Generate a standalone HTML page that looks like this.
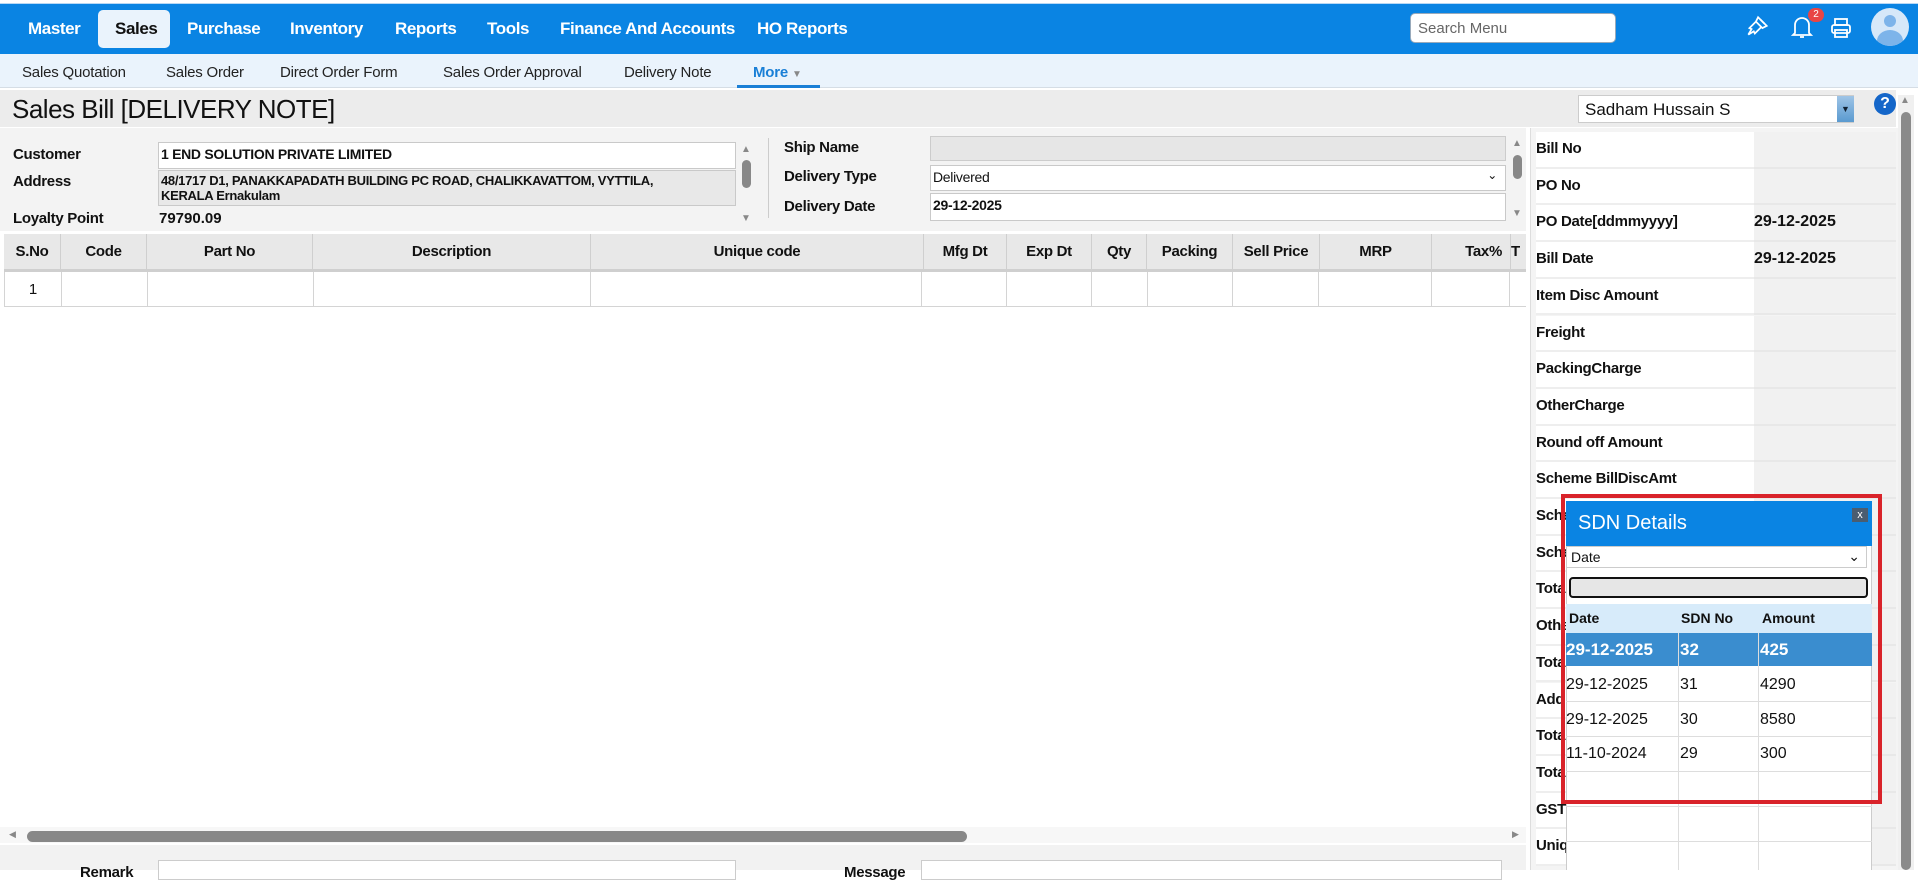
<!DOCTYPE html>
<html><head><meta charset="utf-8"><style>
*{box-sizing:border-box;margin:0;padding:0}
body{width:1918px;height:870px;overflow:hidden;position:relative;background:#fff;font-family:"Liberation Sans",sans-serif;color:#111}
.a{position:absolute}
.nav{left:0;top:3px;width:1918px;height:51px;background:#0a84e3;border-top:1px solid #b8d8f5}
.ni{position:absolute;top:19px;color:#fff;font-size:17px;font-weight:bold;letter-spacing:-0.4px}
.sub{left:0;top:54px;width:1918px;height:34px;background:#eaf3fc;border-bottom:1px solid #d5dde5}
.si{position:absolute;top:64px;font-size:15px;color:#222;letter-spacing:-0.2px}
.lbl{font-size:15px;font-weight:bold;letter-spacing:-0.3px;color:#111}
.inp{background:#fff;border:1px solid #c9c9c9;font-size:14px;font-weight:bold;padding:3px 2px;letter-spacing:-0.3px}
.gh{top:234px;height:38px;background:#e8e8e8;border-bottom:3px solid #cfcfcf;border-right:1px solid #cfcfcf;font-size:15px;font-weight:bold;text-align:center;line-height:36px;letter-spacing:-0.3px}
.gr{top:272px;height:35px;border-right:1px solid #d4d4d4;border-bottom:1px solid #d4d4d4}
.rl{left:1536px;width:218px;height:36.7px;background:#fff;border-bottom:2px solid #eee;font-size:15px;font-weight:bold;line-height:34px;padding-left:0;letter-spacing:-0.3px;overflow:hidden;white-space:nowrap}
.rv{left:1754px;width:142px;height:36.7px;background:#f1f1f1;border-bottom:2px solid #e8e8e8;font-size:16px;font-weight:bold;line-height:34px}
.pc{font-size:16px;line-height:35px}
</style></head><body>

<div class="a nav"></div>
<div class="a" style="left:98px;top:10px;width:72px;height:38px;background:#eaf3fc;border-radius:5px"></div>
<div class="ni" style="left:28px">Master</div>
<div class="ni" style="left:115px;color:#111">Sales</div>
<div class="ni" style="left:187px">Purchase</div>
<div class="ni" style="left:290px">Inventory</div>
<div class="ni" style="left:395px">Reports</div>
<div class="ni" style="left:487px">Tools</div>
<div class="ni" style="left:560px">Finance And Accounts</div>
<div class="ni" style="left:757px">HO Reports</div>
<div class="a" style="left:1410px;top:13px;width:206px;height:30px;background:#fff;border-radius:5px;border:1px solid #9ab;font-size:15px;color:#666;padding:6px 7px">Search Menu</div>
<svg class="a" style="left:1744px;top:14px" width="26" height="26" viewBox="0 0 24 24" fill="none" stroke="#fff" stroke-width="1.6"><path d="M13 3l8 8-4 2-6-6zM11 7l-6 6 2 1-3 5 5-3 1 2 6-6"/><path d="M15 5l2 2M17 7l2 2"/></svg>
<svg class="a" style="left:1791px;top:14px" width="22" height="26" viewBox="0 0 22 26" fill="none" stroke="#fff" stroke-width="1.8"><path d="M4 19V11a7 7 0 0 1 14 0v8l2 2H2z"/><path d="M9 23h4"/></svg>
<div class="a" style="left:1808px;top:8px;width:16px;height:14px;border-radius:7px;background:#e84545;color:#fff;font-size:10px;text-align:center;line-height:14px">2</div>
<svg class="a" style="left:1830px;top:17px" width="22" height="22" viewBox="0 0 22 22" fill="none" stroke="#fff" stroke-width="1.8"><rect x="5" y="2" width="12" height="6"/><rect x="2" y="8" width="18" height="8" rx="2"/><rect x="5" y="13" width="12" height="7"/></svg>
<div class="a" style="left:1871px;top:8px;width:38px;height:38px;border-radius:50%;background:#d6e8f9;overflow:hidden"><div class="a" style="left:13px;top:7px;width:12px;height:12px;border-radius:50%;background:#7db4ea"></div><div class="a" style="left:6px;top:22px;width:26px;height:22px;border-radius:50%;background:#7db4ea"></div></div>

<div class="a sub"></div>
<div class="si" style="left:22px">Sales Quotation</div>
<div class="si" style="left:166px">Sales Order</div>
<div class="si" style="left:280px">Direct Order Form</div>
<div class="si" style="left:443px">Sales Order Approval</div>
<div class="si" style="left:624px">Delivery Note</div>
<div class="si" style="left:753px;color:#1a7fd6;font-weight:bold">More <span style="font-size:10px;color:#888">▼</span></div>
<div class="a" style="left:737px;top:85px;width:83px;height:3px;background:#1a7fd6"></div>

<div class="a" style="left:0;top:90px;width:1896px;height:37px;background:#ececec"></div>
<div class="a" style="left:12px;top:94px;font-size:26px;letter-spacing:-0.5px">Sales Bill [DELIVERY NOTE]</div>
<div class="a" style="left:1578px;top:95px;width:276px;height:28px;background:#fff;border:1px solid #ccc;font-size:17px;padding:4px 6px">Sadham Hussain S</div>
<div class="a" style="left:1837px;top:96px;width:17px;height:26px;background:linear-gradient(#9ec4e6,#5a9ad0);color:#123;font-size:9px;text-align:center;line-height:26px">▼</div>
<div class="a" style="left:1874px;top:93px;width:22px;height:22px;border-radius:50%;background:#1466c9;color:#fff;font-weight:bold;font-size:16px;text-align:center;line-height:22px">?</div>

<div class="a" style="left:0;top:128px;width:1526px;height:103px;background:#f3f3f3"></div>
<div class="a lbl" style="left:13px;top:146px">Customer</div>
<div class="a lbl" style="left:13px;top:173px">Address</div>
<div class="a lbl" style="left:13px;top:210px">Loyalty Point</div>
<div class="a inp" style="left:158px;top:142px;width:578px;height:27px">1 END SOLUTION PRIVATE LIMITED</div>
<div class="a inp" style="left:158px;top:170px;width:578px;height:36px;background:#e8e8e8;font-size:13px;line-height:15px;padding:2px 40px 2px 2px">48/1717 D1, PANAKKAPADATH BUILDING PC ROAD, CHALIKKAVATTOM, VYTTILA, KERALA Ernakulam</div>
<div class="a" style="left:159px;top:210px;font-size:15px;font-weight:bold">79790.09</div>
<div class="a" style="left:741px;top:144px;font-size:10px;color:#888">▲</div>
<div class="a" style="left:742px;top:160px;width:9px;height:28px;border-radius:5px;background:#888"></div>
<div class="a" style="left:741px;top:213px;font-size:10px;color:#888">▼</div>
<div class="a" style="left:768px;top:138px;width:1px;height:80px;background:#ccc"></div>
<div class="a lbl" style="left:784px;top:139px">Ship Name</div>
<div class="a lbl" style="left:784px;top:168px">Delivery Type</div>
<div class="a lbl" style="left:784px;top:198px">Delivery Date</div>
<div class="a" style="left:930px;top:136px;width:576px;height:25px;background:#e6e6e6;border:1px solid #ccc"></div>
<div class="a inp" style="left:930px;top:165px;width:576px;height:26px;font-weight:normal;font-size:14px">Delivered<span style="position:absolute;right:8px;top:2px;font-size:12px">⌄</span></div>
<div class="a inp" style="left:930px;top:193px;width:576px;height:28px;font-size:14px">29-12-2025</div>
<div class="a" style="left:1512px;top:138px;font-size:10px;color:#888">▲</div>
<div class="a" style="left:1513px;top:155px;width:9px;height:24px;border-radius:5px;background:#888"></div>
<div class="a" style="left:1512px;top:208px;font-size:10px;color:#888">▼</div>

<div class="a gh" style="left:4px;width:57px">S.No</div>
<div class="a gh" style="left:61px;width:86px">Code</div>
<div class="a gh" style="left:147px;width:166px">Part No</div>
<div class="a gh" style="left:313px;width:278px">Description</div>
<div class="a gh" style="left:591px;width:333px">Unique code</div>
<div class="a gh" style="left:924px;width:83px">Mfg Dt</div>
<div class="a gh" style="left:1007px;width:85px">Exp Dt</div>
<div class="a gh" style="left:1092px;width:55px">Qty</div>
<div class="a gh" style="left:1147px;width:86px">Packing</div>
<div class="a gh" style="left:1233px;width:87px">Sell Price</div>
<div class="a gh" style="left:1320px;width:112px">MRP</div>
<div class="a gh" style="left:1432px;width:79px;text-align:right;padding-right:8px">Tax%</div>
<div class="a gh" style="left:1511px;width:15px;text-align:left;border-right:0">T</div>
<div class="a gr" style="left:4px;width:58px;border-left:1px solid #d4d4d4;text-align:center;line-height:35px;font-size:15px">1</div>
<div class="a gr" style="left:62px;width:86px"></div><div class="a gr" style="left:148px;width:166px"></div><div class="a gr" style="left:314px;width:277px"></div><div class="a gr" style="left:591px;width:331px"></div><div class="a gr" style="left:922px;width:85px"></div><div class="a gr" style="left:1007px;width:85px"></div><div class="a gr" style="left:1092px;width:56px"></div><div class="a gr" style="left:1148px;width:85px"></div><div class="a gr" style="left:1233px;width:86px"></div><div class="a gr" style="left:1319px;width:113px"></div><div class="a gr" style="left:1432px;width:78px"></div><div class="a gr" style="left:1510px;width:16px;border-right:0"></div>

<div class="a" style="left:0;top:827px;width:1526px;height:16px;background:#f7f7f7"></div>
<div class="a" style="left:9px;top:829px;font-size:9px;color:#888">◀</div>
<div class="a" style="left:27px;top:831px;width:940px;height:11px;border-radius:6px;background:#888"></div>
<div class="a" style="left:1512px;top:829px;font-size:9px;color:#888">▶</div>
<div class="a" style="left:0;top:845px;width:1526px;height:25px;background:#f2f2f2"></div>
<div class="a lbl" style="left:80px;top:864px">Remark</div>
<div class="a" style="left:158px;top:860px;width:578px;height:20px;background:#fff;border:1px solid #ccc"></div>
<div class="a lbl" style="left:844px;top:864px">Message</div>
<div class="a" style="left:921px;top:860px;width:581px;height:20px;background:#fff;border:1px solid #ccc"></div>

<div class="a" style="left:1530px;top:128px;width:368px;height:742px;background:#f4f4f4;border-left:1px solid #ddd"></div>
<div class="a rl" style="top:132px">Bill No</div><div class="a rv" style="top:132px"></div>
<div class="a rl" style="top:168.7px">PO No</div><div class="a rv" style="top:168.7px"></div>
<div class="a rl" style="top:205.4px">PO Date[ddmmyyyy]</div><div class="a rv" style="top:205.4px">29-12-2025</div>
<div class="a rl" style="top:242.1px">Bill Date</div><div class="a rv" style="top:242.1px">29-12-2025</div>
<div class="a rl" style="top:278.8px">Item Disc Amount</div><div class="a rv" style="top:278.8px"></div>
<div class="a rl" style="top:315.5px">Freight</div><div class="a rv" style="top:315.5px"></div>
<div class="a rl" style="top:352.2px">PackingCharge</div><div class="a rv" style="top:352.2px"></div>
<div class="a rl" style="top:388.9px">OtherCharge</div><div class="a rv" style="top:388.9px"></div>
<div class="a rl" style="top:425.6px">Round off Amount</div><div class="a rv" style="top:425.6px"></div>
<div class="a rl" style="top:462.3px">Scheme BillDiscAmt</div><div class="a rv" style="top:462.3px"></div>
<div class="a rl" style="top:499px">Scheme</div><div class="a rv" style="top:499px"></div>
<div class="a rl" style="top:535.7px">Scheme</div><div class="a rv" style="top:535.7px"></div>
<div class="a rl" style="top:572.4px">Total</div><div class="a rv" style="top:572.4px"></div>
<div class="a rl" style="top:609.1px">Other</div><div class="a rv" style="top:609.1px"></div>
<div class="a rl" style="top:645.8px">Total</div><div class="a rv" style="top:645.8px"></div>
<div class="a rl" style="top:682.5px">Add</div><div class="a rv" style="top:682.5px"></div>
<div class="a rl" style="top:719.2px">Total</div><div class="a rv" style="top:719.2px"></div>
<div class="a rl" style="top:755.9px">Total</div><div class="a rv" style="top:755.9px"></div>
<div class="a rl" style="top:792.6px">GST</div><div class="a rv" style="top:792.6px"></div>
<div class="a rl" style="top:829.3px">Unique</div><div class="a rv" style="top:829.3px"></div>

<div class="a" style="left:1898px;top:95px;width:16px;height:775px;background:#f0f0f0"></div>
<div class="a" style="left:1900px;top:95px;font-size:10px;color:#888">▲</div>
<div class="a" style="left:1901px;top:112px;width:10px;height:758px;border-radius:5px;background:#8a8a8a"></div>

<!-- popup -->
<div class="a" style="left:1566px;top:501px;width:306px;height:369px;background:#fff;border-left:1px solid #ccc;border-right:1px solid #ccc"></div>
<div class="a" style="left:1566px;top:501px;width:306px;height:45px;background:#0a84e3"></div>
<div class="a" style="left:1578px;top:512px;font-size:20px;color:#fff">SDN Details</div>
<div class="a" style="left:1852px;top:508px;width:16px;height:14px;background:#4a5d70;color:#fff;font-size:11px;text-align:center;line-height:14px">x</div>
<div class="a" style="left:1566px;top:546px;width:301px;height:22px;border:1px solid #ccc;font-size:14px;padding:2px 4px">Date<span style="position:absolute;right:6px;top:1px">⌄</span></div>
<div class="a" style="left:1569px;top:577px;width:299px;height:21px;background:#e6e6e6;border:2px solid #111;border-radius:4px"></div>
<div class="a" style="left:1566px;top:604px;width:306px;height:29px;background:#d7ebfa"></div>
<div class="a" style="left:1569px;top:610px;font-size:14px;font-weight:bold">Date</div>
<div class="a" style="left:1681px;top:610px;font-size:14px;font-weight:bold">SDN No</div>
<div class="a" style="left:1762px;top:610px;font-size:14px;font-weight:bold">Amount</div>
<div class="a" style="left:1566px;top:633px;width:306px;height:33px;background:#3a8dcf"></div>
<div class="a" style="left:1678px;top:633px;width:1px;height:237px;background:#ddd"></div>
<div class="a" style="left:1758px;top:633px;width:1px;height:237px;background:#ddd"></div>
<div class="a" style="left:1566px;top:701px;width:306px;height:1px;background:#ddd"></div>
<div class="a" style="left:1566px;top:736px;width:306px;height:1px;background:#ddd"></div>
<div class="a" style="left:1566px;top:771px;width:306px;height:1px;background:#ddd"></div>
<div class="a" style="left:1566px;top:806px;width:306px;height:1px;background:#ddd"></div>
<div class="a" style="left:1566px;top:841px;width:306px;height:1px;background:#ddd"></div>
<div class="a pc" style="left:1566px;top:632px;color:#fff;font-weight:bold;font-size:17px">29-12-2025</div>
<div class="a pc" style="left:1680px;top:632px;color:#fff;font-weight:bold;font-size:17px">32</div>
<div class="a pc" style="left:1760px;top:632px;color:#fff;font-weight:bold;font-size:17px">425</div>
<div class="a pc" style="left:1566px;top:667px">29-12-2025</div><div class="a pc" style="left:1680px;top:667px">31</div><div class="a pc" style="left:1760px;top:667px">4290</div>
<div class="a pc" style="left:1566px;top:702px">29-12-2025</div><div class="a pc" style="left:1680px;top:702px">30</div><div class="a pc" style="left:1760px;top:702px">8580</div>
<div class="a pc" style="left:1566px;top:736px">11-10-2024</div><div class="a pc" style="left:1680px;top:736px">29</div><div class="a pc" style="left:1760px;top:736px">300</div>
<div class="a" style="left:1561px;top:494px;width:321px;height:310px;border:4px solid #d9232a"></div>
</body></html>
